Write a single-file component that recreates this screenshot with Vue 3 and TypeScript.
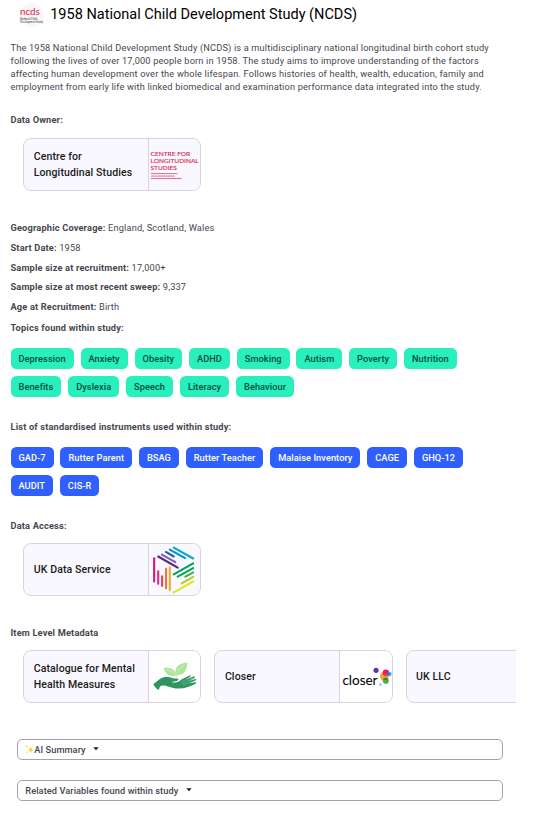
<script setup lang="ts">
interface Fact {
  label: string
  value: string
}

const facts: Fact[] = [
  { label: 'Geographic Coverage:', value: 'England, Scotland, Wales' },
  { label: 'Start Date:', value: '1958' },
  { label: 'Sample size at recruitment:', value: '17,000+' },
  { label: 'Sample size at most recent sweep:', value: '9,337' },
  { label: 'Age at Recruitment:', value: 'Birth' },
]

const topics: string[] = [
  'Depression', 'Anxiety', 'Obesity', 'ADHD', 'Smoking', 'Autism', 'Poverty',
  'Nutrition', 'Benefits', 'Dyslexia', 'Speech', 'Literacy', 'Behaviour',
]

const instruments: string[] = [
  'GAD-7', 'Rutter Parent', 'BSAG', 'Rutter Teacher', 'Malaise Inventory',
  'CAGE', 'GHQ-12', 'AUDIT', 'CIS-R',
]
</script>

<template>
  <main class="page">
    <header class="header">
      <svg class="avatar" viewBox="0 0 24 24">
        <circle cx="12" cy="12" r="11.8" fill="#f8f7f8" />
        <text x="0" y="12.4" class="ncds" textLength="19.6" lengthAdjust="spacingAndGlyphs">ncds</text>
        <text x="0" y="16.9" class="ncds-sub" textLength="17" lengthAdjust="spacingAndGlyphs">National Child</text>
        <text x="0" y="20.2" class="ncds-sub" textLength="23" lengthAdjust="spacingAndGlyphs">Development Study</text>
      </svg>
      <h1>1958 National Child Development Study (NCDS)</h1>
    </header>

    <p class="intro">
      The 1958 National Child Development Study (NCDS) is a multidisciplinary national longitudinal birth cohort study
      following the lives of over 17,000 people born in 1958. The study aims to improve understanding of the factors
      affecting human development over the whole lifespan. Follows histories of health, wealth, education, family and
      employment from early life with linked biomedical and examination performance data integrated into the study.
    </p>

    <section class="owner">
      <h2>Data Owner:</h2>
      <div class="cards">
        <article class="card">
          <div class="name">Centre for Longitudinal Studies</div>
          <svg class="logo tinted" viewBox="0 0 52 51">
            <g class="cls">
              <text x="1.6" y="16.6" textLength="40" lengthAdjust="spacingAndGlyphs">CENTRE FOR</text>
              <text x="1.6" y="23.6" textLength="48.6" lengthAdjust="spacingAndGlyphs">LONGITUDINAL</text>
              <text x="1.6" y="30.6" textLength="26.5" lengthAdjust="spacingAndGlyphs">STUDIES</text>
            </g>
            <path d="M2 34.7H28.8M2 37.2H26M2 39.7H33" stroke="#e2547c" stroke-width=".9" />
          </svg>
        </article>
      </div>
    </section>

    <dl class="facts">
      <div v-for="fact in facts" :key="fact.label">
        <dt>{{ fact.label }}</dt>
        <dd>{{ fact.value }}</dd>
      </div>
    </dl>

    <section class="topics">
      <h2>Topics found within study:</h2>
      <div class="chips">
        <span v-for="topic in topics" :key="topic" class="chip green">{{ topic }}</span>
      </div>
    </section>

    <section class="instruments">
      <h2>List of standardised instruments used within study:</h2>
      <div class="chips">
        <span v-for="item in instruments" :key="item" class="chip blue">{{ item }}</span>
      </div>
    </section>

    <section class="access">
      <h2>Data Access:</h2>
      <div class="cards">
        <article class="card">
          <div class="name">UK Data Service</div>
          <svg class="logo tinted" viewBox="0 0 52 51" fill="none" stroke-width="2.1" stroke-linecap="round">
            <path d="M25 3.4L44.6 14.4" stroke="#00a9ce" />
            <path d="M21 5.4L36.4 14" stroke="#0091c8" />
            <path d="M17 7.8L25 12.4" stroke="#1c5fa8" />
            <path d="M13 10.4L26.6 18" stroke="#7d5fa5" />
            <path d="M9.3 12.4L29 23.7" stroke="#55257f" />
            <path d="M5.2 14.2V37.6" stroke="#df146c" />
            <path d="M9.3 27.4V40" stroke="#d52d83" />
            <path d="M13.2 32.4V42.1" stroke="#e54646" />
            <path d="M17.2 24.7V44.4" stroke="#ed743b" />
            <path d="M21 23.4V46.4" stroke="#f5a728" />
            <path d="M44.6 19.4L25 30.4" stroke="#00a34e" />
            <path d="M44.6 24.1L29 32.7" stroke="#00a65a" />
            <path d="M44.6 28.4L36.8 32.7" stroke="#43ad43" />
            <path d="M44.6 33L33 39.6" stroke="#b3cc35" />
            <path d="M44.6 37.6L25 48.6" stroke="#e6e523" />
          </svg>
        </article>
      </div>
    </section>

    <section class="metadata">
      <h2>Item Level Metadata</h2>
      <div class="cards">
        <article class="card">
          <div class="name">Catalogue for Mental Health Measures</div>
          <svg class="logo" viewBox="0 0 52 51">
            <path d="M27.4 25.3C19 25 16 22.2 14.7 16.9C21.7 16.2 25.8 18.6 26.8 22.2C26 16.6 29.3 12 38.7 11.3C38.6 19.5 34.9 24 28.8 23.9L28 26H27Z" fill="#ade69b" />
            <path d="M17 18.6C21.6 19 24.6 21.2 27.3 25.3C29 19.6 31.8 16.5 36.2 14" fill="none" stroke="#ddf5d5" stroke-width=".55" />
            <path d="M4.3 33C8.6 30.4 11.2 26.4 16.4 25.9C20.2 25.6 23.3 27.8 27.4 27.6C30.2 27.5 30.4 29.3 28 30L22.7 31C27.7 32.4 30.4 30.8 33.5 28.1L41 24.4C42.4 24 42.7 25 41.4 26L37.3 28.7L44.9 25.5C46.5 25 46.8 26.3 45.4 27.2L39.6 30.2L46.5 28C48 27.8 48 29 46.5 29.8L40.5 32.3L46.6 31.2C48 31.2 48 32.3 46.7 33C41 35.6 35.6 38 29 37.7C22 37.4 17 33.6 12.6 34.8C11 35.2 10.2 37.3 10.2 39C7.7 38.4 5.4 36 4.3 33Z" fill="#309562" />
            <path d="M31.6 31.8L41 26.3M33.5 32.7L44.8 27M34 34L45.8 30" stroke="#91c7a9" stroke-width=".4" />
          </svg>
        </article>
        <article class="card">
          <div class="name">Closer</div>
          <svg class="logo" viewBox="0 0 52 51">
            <text class="closer" x="2.4" y="33.6" textLength="35.5" lengthAdjust="spacingAndGlyphs">closer</text>
            <circle cx="36.4" cy="19.3" r="2.6" fill="#61359a" />
            <circle cx="44.8" cy="25.3" r="4.4" fill="#f6a440" />
            <circle cx="46.3" cy="21.7" r="3.2" fill="#e3157c" />
            <path d="M43.3 23.2A4.4 4.4 0 0 1 49 23.9A3.2 3.2 0 0 1 43.3 23.2Z" fill="#e53e3d" />
            <circle cx="50" cy="23" r="2.2" fill="#41aae9" />
            <circle cx="48.9" cy="22.6" r=".9" fill="#344687" />
            <circle cx="46.3" cy="29.8" r="3.1" fill="#50ad49" />
            <path d="M43.5 28.5A3.1 3.1 0 0 1 48.4 27.7A4.4 4.4 0 0 1 43.5 28.5Z" fill="#338338" />
            <circle cx="40.8" cy="33.6" r="1.1" fill="#48b5ed" />
          </svg>
        </article>
        <article class="card">
          <div class="name">UK LLC</div>
          <div class="logo"></div>
        </article>
      </div>
    </section>

    <div class="panels">
      <button class="panel" type="button">
        <svg class="sparkles" viewBox="0 0 9 9" fill="#ffcf42">
          <path d="M5.7 1.2Q6 4 8.7 4.8Q6 5.5 5.7 8.5Q5.2 5.5 2.8 4.8Q5.3 4 5.7 1.2Z" />
          <path d="M1.9 0Q2 1.3 3.2 1.6Q2 2 1.9 3.2Q1.7 2 .6 1.6Q1.7 1.3 1.9 0Z" />
          <path d="M2 6Q2.1 7 3 7.3Q2.1 7.5 2 8.5Q1.8 7.5 1 7.3Q1.8 7 2 6Z" />
        </svg>
        <span>AI Summary</span>
        <svg class="caret" viewBox="0 0 6 4"><path d="M.3 .3H5.7L3 3.3Z" fill="#1c1b20" /></svg>
      </button>
      <button class="panel" type="button">
        <span>Related Variables found within study</span>
        <svg class="caret" viewBox="0 0 6 4"><path d="M.3 .3H5.7L3 3.3Z" fill="#1c1b20" /></svg>
      </button>
    </div>
  </main>
</template>

<style>
body {
  margin: 0;
  background: #fff;
}
</style>

<style scoped>
.page {
  box-sizing: border-box;
  width: 516px;
  height: 835px;
  padding: 3px 0 0 10.5px;
  overflow: hidden;
  font: 400 9.24px/13.2px Roboto, sans-serif;
  letter-spacing: 0.165px;
  color: #47464f;
}
.header {
  display: flex;
  align-items: center;
  gap: 6.4px;
  height: 24px;
  padding-left: 9.3px;
}
.avatar {
  width: 24px;
  height: 24px;
  overflow: visible;
}
.ncds {
  font: 400 9.4px Lato, sans-serif;
  letter-spacing: 0;
  fill: #d9385f;
  stroke: #d9385f;
  stroke-width: 0.15px;
}
.ncds-sub {
  font: 400 3px Lato, sans-serif;
  letter-spacing: 0;
  fill: #333;
}
h1 {
  margin: 0;
  padding-top: 1px;
  font-size: 14.52px;
  line-height: 18.5px;
  font-weight: 400;
  letter-spacing: 0;
  color: #000;
  white-space: nowrap;
}
.intro {
  width: 485px;
  margin: 13.8px 0 19.6px;
}
h2 {
  margin: 0;
  font-size: 9.24px;
  line-height: 13.2px;
  font-weight: 700;
}
.owner {
  height: 107.8px;
}
.cards {
  display: flex;
  gap: 13px;
  margin: 11.5px 0 0 12.7px;
}
.card {
  box-sizing: border-box;
  display: flex;
  flex: none;
  width: 178.2px;
  height: 53px;
  border: 1px solid #d6d4e4;
  border-radius: 8px;
  overflow: hidden;
  background: #f9f8ff;
}
.name {
  box-sizing: border-box;
  display: flex;
  flex: 1;
  align-items: center;
  padding: 0.6px 10px 0 9.5px;
  font-size: 10.56px;
  line-height: 15.84px;
  font-weight: 500;
  letter-spacing: 0.1px;
  color: #1c1b20;
}
.logo {
  flex: none;
  width: 51.5px;
  height: 51px;
  border-left: 1px solid #d6d4e4;
  background: #fff;
}
.logo.tinted {
  background: #f9f8ff;
}
.cls {
  font: 400 6.6px Lato, sans-serif;
  letter-spacing: 0;
  fill: #dc1d50;
  stroke: #dc1d50;
  stroke-width: 0.12px;
}
.closer {
  font: 400 14.4px Lato, sans-serif;
  letter-spacing: 0;
  fill: #080808;
  stroke: #080808;
  stroke-width: 0.1px;
}
.facts {
  display: flex;
  flex-direction: column;
  gap: 6.6px;
  margin: 0;
}
.facts > div {
  display: flex;
  gap: 2.5px;
}
dt {
  font-weight: 700;
}
dd {
  margin: 0;
}
.topics {
  height: 99px;
  margin-top: 7.2px;
}
.chips {
  display: flex;
  flex-wrap: wrap;
  gap: 6.6px 6.8px;
  width: 460px;
  margin-top: 14.3px;
}
.chip {
  height: 21.12px;
  padding: 0 8px;
  border-radius: 5.3px;
  font-weight: 500;
  line-height: 21.12px;
  letter-spacing: 0.066px;
}
.green {
  background: #28efbb;
  color: #084b3c;
}
.blue {
  background: #2f5fff;
  color: #fff;
}
.instruments {
  height: 99px;
}
.access {
  height: 107.4px;
}
.metadata {
  height: 76.9px;
}
.metadata .cards {
  margin-top: 11.1px;
}
.panels {
  display: flex;
  flex-direction: column;
  gap: 20px;
  margin: 36px 0 0 6.5px;
}
.panel {
  box-sizing: border-box;
  display: flex;
  align-items: center;
  width: 486px;
  height: 21px;
  padding: 0 7.3px;
  border: 1px solid #a3a1ab;
  border-radius: 5px;
  background: #fff;
  color: #47464f;
  font: 500 9.24px/13.2px Roboto, sans-serif;
  letter-spacing: 0.066px;
}
.sparkles {
  width: 9px;
  height: 9px;
}
.caret {
  width: 6px;
  height: 4px;
  margin-left: 7.8px;
}
</style>
